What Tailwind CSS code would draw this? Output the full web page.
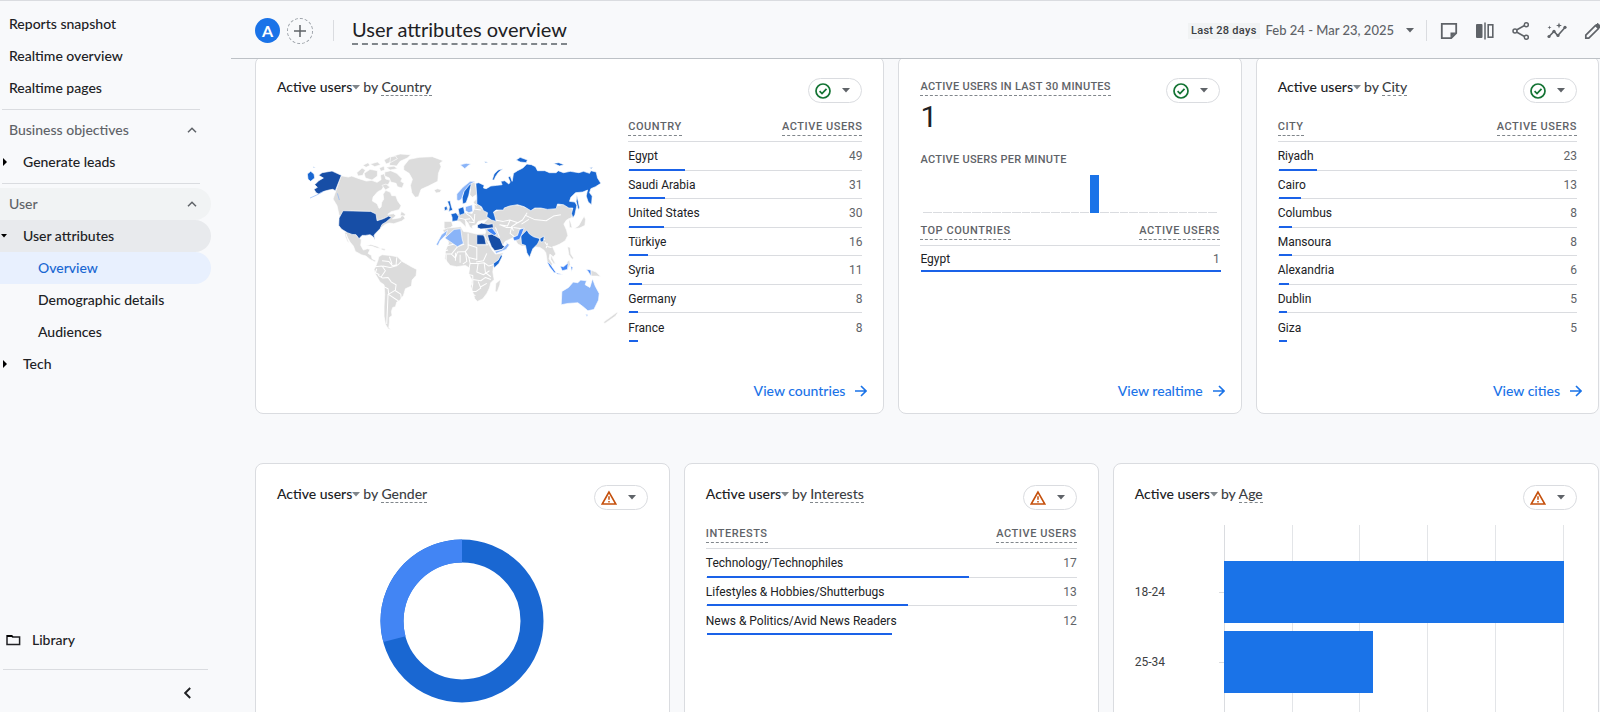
<!DOCTYPE html>
<html lang="en">
  <head>
    <meta charset="UTF-8" />
    <meta name="viewport" content="width=device-width, initial-scale=1.0" />
    <title>User attributes overview</title>

    <script src="https://cdn.jsdelivr.net/npm/@tailwindcss/browser@4"></script>
  </head>
  <body class="flex h-screen overflow-hidden border-t border-[#dadce0] bg-[#f8f9fb] font-[Lato,sans-serif] text-sm font-medium text-[#202124]">
    <!-- Icons -->
    <svg class="hidden">
      <symbol id="caret" viewBox="0 0 8 5"><path d="M0 0h8L4 4.5z" fill="currentColor" /></symbol>
      <symbol id="chevron-up" viewBox="0 0 10 6"><path d="M1 5.2l4-4 4 4" fill="none" stroke="currentColor" stroke-width="1.5" /></symbol>
      <symbol id="check" viewBox="0 0 16 16">
        <circle cx="8" cy="8" r="7" fill="none" stroke="#137333" stroke-width="1.7" />
        <path d="M4.6 8.2l2.4 2.4 4.5-4.8" fill="none" stroke="#137333" stroke-width="1.7" />
      </symbol>
      <symbol id="warning" viewBox="0 0 16 16">
        <path d="M8 2L1.2 14h13.6z" fill="none" stroke="#c5500c" stroke-width="1.6" />
        <path d="M8 6.2v3.6M8 11v1.5" stroke="#c5500c" stroke-width="1.5" />
      </symbol>
      <symbol id="arrow" viewBox="0 0 12 12"><path d="M0 6h10.5M6 1l5 5-5 5" fill="none" stroke="currentColor" stroke-width="1.6" /></symbol>
    </svg>

    <!-- Sidebar -->
    <aside class="flex w-[211px] shrink-0 flex-col">
      <nav class="flex flex-col pt-[7px]">
        <a href="#" class="flex h-8 items-center pl-[9px]">Reports snapshot</a>
        <a href="#" class="flex h-8 items-center pl-[9px]">Realtime overview</a>
        <a href="#" class="flex h-8 items-center pl-[9px]">Realtime pages</a>
        <hr class="mt-[5px] mr-[11px] mb-1 ml-0.5 border-[#dadce0]" />
        <button class="flex h-8 items-center justify-between pr-3.5 pl-[9px] text-[#5f6368]">Business objectives
          <svg class="h-1.5 w-2.5"><use href="#chevron-up" /></svg>
        </button>
        <a href="#" class="flex h-8 items-center gap-4 pl-[3px]">
          <svg class="h-2 w-1" viewBox="0 0 4 8"><path d="M0 0l4 4-4 4z" /></svg>Generate leads
        </a>
        <hr class="mt-[5px] mr-[11px] mb-1 ml-0.5 border-[#dadce0]" />
        <button class="flex h-8 items-center justify-between rounded-r-full bg-[#f1f3f4] pr-3.5 pl-[9px] text-[#5f6368]">User
          <svg class="h-1.5 w-2.5"><use href="#chevron-up" /></svg>
        </button>
        <a href="#" class="flex h-8 items-center gap-4 rounded-r-full bg-[#e8eaed] pl-px">
          <svg class="h-1 w-1.5" viewBox="0 0 6 4"><path d="M0 0h6L3 3.4z" /></svg>User attributes
        </a>
        <a href="#" class="flex h-8 items-center rounded-r-full bg-[#e8f0fe] pl-[38px] text-[#1967d2]">Overview</a>
        <a href="#" class="flex h-8 items-center pl-[38px]">Demographic details</a>
        <a href="#" class="flex h-8 items-center pl-[38px]">Audiences</a>
        <a href="#" class="flex h-8 items-center gap-4 pl-[3px]">
          <svg class="h-2 w-1" viewBox="0 0 4 8"><path d="M0 0l4 4-4 4z" /></svg>Tech
        </a>
      </nav>
      <a href="#" class="mt-auto flex h-8 items-center gap-[11px] pl-1.5">
        <svg class="h-3 w-[15px]" viewBox="0 0 15 12"><path d="M1 1.8h4.6l1 1.2h7v7.6H1z" fill="none" stroke="currentColor" stroke-width="1.5" /><path d="M1 1h5l1.5 2H1z" /></svg>Library
      </a>
      <hr class="mt-[13px] mr-[3px] ml-[3px] border-[#dadce0]" />
      <button class="mr-5 flex h-[42px] items-center self-end pt-1" aria-label="Collapse">
        <svg class="h-3 w-[7px]" viewBox="0 0 7 12"><path d="M6.2 1L1.2 6l5 5" fill="none" stroke="currentColor" stroke-width="1.9" /></svg>
      </button>
    </aside>

    <div class="flex min-w-0 grow flex-col pl-5">
      <!-- Top bar -->
      <header class="flex h-[58px] shrink-0 items-center border-b border-[#bdc1c6] pt-0.5 pl-6">
        <button class="size-[25px] rounded-full bg-[#1a73e8] text-base font-bold text-white">A</button>
        <button class="ml-[7px] flex size-[26px] items-center justify-center rounded-full border border-dashed border-[#9aa0a6]" aria-label="Add comparison">
          <svg class="size-3" viewBox="0 0 12 12"><path d="M6 0v12M0 6h12" stroke="#5f6368" stroke-width="1.5" /></svg>
        </button>
        <div class="mr-[18px] ml-5 h-[21px] border-l border-[#dadce0]"></div>
        <h1 class="border-b-2 border-dashed border-[#80868b] pb-0.5 text-xl leading-[24px] font-normal">User attributes overview</h1>
        <div class="ml-auto flex items-center">
          <span class="bg-[#f1f3f4] px-[3px] font-[Roboto,sans-serif] text-[11px] leading-4 font-medium tracking-wide text-[#3c4043]">Last 28 days</span>
          <button class="ml-1.5 flex items-center gap-3 text-[13px] text-[#5f6368]">Feb 24 - Mar 23, 2025
            <svg class="h-[5px] w-2"><use href="#caret" /></svg>
          </button>
          <div class="mr-3 ml-3 h-[21px] border-l border-[#dadce0]"></div>
          <div class="-mr-[3px] flex items-center gap-4 text-[#5f6368]">
            <button aria-label="Notes"><svg class="size-5" viewBox="0 0 20 20"><path d="M2.8 2.8h14.4v9.4l-5 5H2.8z" fill="none" stroke="currentColor" stroke-width="1.8" /><path d="M11.5 11.5H17L11.5 17z" fill="currentColor" /></svg></button>
            <button aria-label="Compare"><svg class="size-5" viewBox="0 0 20 20"><rect x="1" y="3" width="6.5" height="14" rx="1" fill="currentColor" /><path d="M10 1.5v17" stroke="currentColor" stroke-width="1.5" /><rect x="13.2" y="3.8" width="4.6" height="12.4" fill="none" stroke="currentColor" stroke-width="1.6" /></svg></button>
            <button aria-label="Share"><svg class="size-5" viewBox="0 0 20 20" fill="none" stroke="currentColor" stroke-width="1.5"><path d="M5.5 9l8-4.5M5.5 11l8 4.5" /><circle cx="4" cy="10" r="2" /><circle cx="15.3" cy="3.8" r="2" /><circle cx="15.3" cy="16.2" r="2" /></svg></button>
            <button aria-label="Insights"><svg class="size-5" viewBox="0 0 20 20" fill="currentColor"><path d="M2 15.5l5-5 3.8 4 7.2-8" fill="none" stroke="currentColor" stroke-width="1.6" /><circle cx="2" cy="15.5" r="1.6" /><circle cx="7" cy="10.3" r="1.6" /><circle cx="11" cy="14.5" r="1.6" /><circle cx="18" cy="6.3" r="1.6" /><path d="M12 1.5l.8 2.2 2.2.8-2.2.8-.8 2.2-.8-2.2-2.2-.8 2.2-.8zM2.5 4.5l.5 1.5 1.5.5-1.5.5-.5 1.5-.5-1.5-1.5-.5 1.5-.5z" /></svg></button>
            <button aria-label="Edit"><svg class="size-5" viewBox="0 0 20 20"><path d="M2.8 17.2v-3L12.5 4.5l3 3L5.8 17.2z" fill="none" stroke="currentColor" stroke-width="1.7" /><path d="M12.5 4.5l2.2-2.2 3 3-2.2 2.2z" fill="currentColor" stroke="currentColor" /></svg></button>
          </div>
        </div>
      </header>

      <main class="min-h-0 grow overflow-hidden pr-px pl-6">
        <div class="-mt-[3px] grid grid-cols-[11fr_6fr_6fr] gap-3.5">
          <!-- Country -->
          <section class="flex h-[358px] flex-col rounded-lg border border-[#dadce0] bg-white px-[21px] pt-[21px] pb-3">
            <div class="flex items-start justify-between">
              <h2 class="flex items-baseline leading-[18px]">Active users<svg class="mr-[3px] h-[5px] w-2 self-center text-[#80868b]"><use href="#caret" /></svg><span class="text-[#3c4043]">by <span class="border-b border-dashed border-[#80868b]">Country</span></span></h2>
              <button class="flex h-[25px] w-[54px] items-center justify-between rounded-full border border-[#dadce0] pr-[11px] pl-1.5 text-[#5f6368]" aria-label="Data quality"><svg class="size-4"><use href="#check" /></svg><svg class="h-[5px] w-2"><use href="#caret" /></svg></button>
            </div>
            <div class="mt-2 grid grid-cols-[3fr_2fr]">
              <svg class="mt-[29px] w-full" viewBox="-69 0 1053 600" stroke="#fff" stroke-width="2" stroke-linejoin="round" role="img" aria-label="Active users by country">
                <g fill="#dcdcdc">
                  <!-- Canada and the Arctic islands -->
                  <path d="M123 107l22 4 10-3 22 8 22 7 16-2 16 6 12-8-2-14 12-4 4 16 14 4-6 12-14 6-6 10-12 6-14 16-2 12 14 8 6 14 6-4 2-14 6-10-2-14 8-12 14 6 4 10 12 0 6 16 10 14-6 12-24 6-10 8 18-2 6 6-10 10 24-4 6-10 8 12-10 8-24 8-14-2-12 4-12 10-16 2-2-18-16-6-82-4-10-12-6-28-12-20z" />
                  <path d="M170 98l16-14 10 6-8 16-14 2zM192 100l18-12 22 4 0 16-16 12-20-6zM188 76l16-8 6 8-12 6zM210 72l22-6 10 8-18 6zM238 84l14-6 2 12-12 4zM254 96l18-4 18 8 16 16-4 8 10 6-6 14-14-4-4-10-16-4-4-12-14-6zM258 82l24-4 10 8-22 4zM252 60l18-10 16-2 6 8-18 10-16 6zM272 50l28-8 32 2-10 10-22 10-10 14-22-2zM246 136l12-4 12 10-14 8z" />
                  <path d="M311 78l16-20 30-6 40-2 32 12-10 8 4 10-8 20-2 24-28 14-22 10-8 22-10 2-10-14-4-22 6-18-10-18-16-10z" />
                  <path d="M402 150l10-4 12 3-4 8-12 2zM304 214l12 8-2 6-14-2z" />
                  <!-- Mexico and Central America -->
                  <path d="M134 276l14 2 18 4 10 12 8 4-2 18 8 14 12-4 8 2-6 12 10 6 2 10 12 6-4 3-14-7-12-10-14-4-18-10-6-16-10-12-8-14-4-10 4 14 6 14-6-6-6-14z" />
                  <path d="M198 318l14-5 20 6 10 6-12-1-16-6zM244 324l12 3-2 4-10-2z" />
                  <!-- South America -->
                  <path d="M236 350l10-6 24 2 22 4 14 14 14 8 14 8 16 8-2 18-12 14-2 18-18 8-6 20-12 16-8 4-4 14-8 2-4 12 2 12-8 6 0 14-2 16 6 6-8-2-8-14-4-24 0-30 2-36-2-28-12-8-14-24-4-14 6-12 6-16z" />
                  <!-- Europe -->
                  <path d="M432 244l22 0 4 12-8 8-14 4-4-6zM466 224l16-8 20 2 14 2 8-18-4-16 8-8 8 6 6 18 20 14 10 10-8 12-30 6-6 10-12 4 2 8-8-4-6-12-8-6 2 18-10-10-8-8-12-2zM509 132l14-8 6 20 2 18-14 10-8-8 2-16zM438 203l6-2 1 9-7 3z" />
                  <!-- Africa -->
                  <path d="M428 270l14-6 40-4 8 14 14 2 26 6 26-2 2 12 8 20 10 18 10 12 24-4-10 20-20 22-2 16 4 22-10 10-4 16-8 16-12 16-16 8-8-8-6-20-6-16 4-20-10-18 2-18-12-8-26 4-20-4-16-20 2-24 10-24z" />
                  <path d="M587 430l14-12-2 16-8 22-6-2z" />
                  <!-- Asia -->
                  <path d="M581 216l30-14 30-10 24 6 28 12 16-8 30 4 20-10 20 0 14-6 20 10 6 12-4 20-16 8-8 12 8 18 4 16-8 16-16 10-14 6-8 2 10 22-8 8-10-8-2 14 10 16-4 6-12-14-4-26-6-8-12-8-34-4-20 0-12-6-12-20-26 12-8 14-30-6-16-10-8-16 4-12-10-20z" />
                  <path d="M806 236l6 12 4 16-8-2zM846 238l6-10 4 10-2 18-16 8-16 2 14-10zM802 320l8 2 2 20 8 12-4 4-10-14z" />
                  <path d="M752 344l8 16 6 12-6-2-8-12zM800 366l8-6 2 14-6 12zM872 390l16 6 14 14-12-2-18 0zM948 518l6-2-8 12-32 22-4-4z" />
                </g>
                <!-- Borders inside the continents -->
                <path d="M246 362l20 2 10 12 18-2 10-10M224 380l22-2 10 14-14 20M248 378l22 4 22-6M234 406l14 8 16-2 10 14 14 8-2 16-20 12-2-16-16-8M264 462l-4 90M286 452l16 10 2 16M264 462l30 20 4 12M268 350l8 22M290 352l-2 22M230 386l-4 12 12 6
                         M410 306l24-4 10 14 20-4M432 310v32h22l18-22 20-8M444 330l-32 8M454 342l12 12 6-18 24-2 8-10V280M504 314l26 8v36l-24-6-10-16M530 314h34M560 340l-10 22-22 4M496 334l4 30-12 8M466 338v24M480 344v24M424 340v22M438 344v22M506 352l4 18 24 0 18-2 14 10M510 370l-6 28h-12M534 370l-4 26 20 8 18-12M552 368l4 30M492 400l26 6v26h-22M518 418l24 4 14-10 16 6M518 432l-6 30M534 424l8 20-14 10-12 0M542 440l18-10M500 456l12 6 14 4M496 432h22M566 378l24-8M556 398l16 12
                         M470 232l24 6 16-2M498 220l14 10 10 14M512 186l18 10M516 206l26 4M494 238l10 14M506 246l18 2M524 222l-2 24
                         M585 240l24 4 20-4 24 8 14-8 14-22M630 240l-8 18-24-4M600 254l18 8 20 0M652 248l-18 12 6 12M640 262l24 4M676 226l26 12 36 4 22-14 22-4M634 262l-4 18 18 14M668 264l-10 18M680 280l30 18 24 0M734 306l10 14 10 2M742 310l-4 14M664 252l22-14M586 262l12 30" fill="none" stroke-width="3" />
                <!-- 20 and more active users -->
                <g fill="#174ea6">
                  <path d="M66 98l30-5 28 13-18 46-8-4-12 2-14 4-16 8-8-4-6-10 10-6-8-8 12-12 14-8-14-8z" />
                  <path d="M129 212L212 214 228 222 231 242 250 236 266 228 274 232 258 246 246 253 240 266 226 280 222 286 225 300 219 290 210 284 196 286 186 286 177 296 168 284 156 283 142 278 124 267 116 256 117 234z" />
                  <path d="M532 255l12-6 20 4 14-2 2 12-16 2-22 2-10-4zM530 284l20 1 4 8 4 20h-28zM562 285l14-3 24 14 8 20 8 4-12 8-20 4-10-12-8-20z" />
                </g>
                <g fill="#1967d2">
                  <path d="M527 130L536 128 552 136 550 144 558 146 572 138 590 136 606 134 602 124 614 122 626 132 630 126 624 112 630 108 636 124 640 100 652 92 668 84 680 72 694 74 706 80 712 92 734 92 748 98 768 98 774 92 790 98 810 94 836 98 850 94 868 100 872 92 888 96 892 114 902 130 886 140 872 146 868 158 876 168 874 194 864 186 858 168 862 150 848 156 826 158 812 172 808 184 824 186 830 196 824 224 818 234 814 220 818 204 806 204 790 194 772 192 768 206 742 208 722 204 704 204 692 212 672 200 652 194 628 198 612 204 610 210 588 210 580 216 584 228 588 244 574 240 560 230 562 218 550 212 544 200 530 192 530 170z" />
                  <path d="M576 120l6-18 12-12 14-4-14 12-8 12-4 10zM648 60l12-8 22 8-4 8-18-2zM760 70l16-2 16 6-14 4zM868 83l10-1-4 4zM553 65l10 1-6 3zM830 166l4 18 4 20-4 4-6-24z" />
                  <path d="M22 102l10-8 10 8 2 12-12 10-8-6zM40 80l6 2-6 2z" />
                  <path d="M492 150l8-14 14-6-4 16-4 20-8 22-10 4-2-20zM474 206l16-6 4 20-16 6zM452 222l16-4 8 12-4 12-16 2 0-12zM442 184l8-2 4 18 4 10-12 4 2-14zM432 202l8-4 2 10-8 4z" />
                  <path d="M662 288l18-18 8 12 12 8 20 6-8 16-14 14-10 26-8-14-4-22-12-4zM718 296l14-8-2 16-8 2zM580 370l14-10 10-18 2 8-10 20-14 14z" />
                </g>
                <g fill="#4285f4">
                  <path d="M638 292l14-6 6-18 14-4-6 16-8 18-16 4zM558 268l10-2 8-2 14 18-8 4-16-10zM740 364l10 8 18 26-6 0-14-18zM780 378l10 2 14-12-2 20-16 4zM768 398l22 6-20-2zM858 388l14 2v18l-8-14zM812 378l6 4-4 12z" />
                </g>
                <g fill="#8ab4f8">
                  <path d="M434 294l28-26 20-2 4 30 4 14-18 10zM408 314l16-30 18-14-4 14-18 18-6 14zM470 180l0-18 18-20 22-18 16 0-18 10-16 20-8 24-8 4zM496 200l20-6 2 20-12 4-10-6zM480 74l18-4 14 2-12 8-6 6zM584 334l22-6 14-16-4-6 12 8-10 14-30 12z" />
                  <path d="M785 454l20-12 14-16 14 2 8-8 18 2-4 12 14 8 8-26 8 22 12 22-2 20-14 28-18 4-14-12-16-12-30 2-20 4zM856 522l8 2-4 6z" />
                </g>
                <path d="M30 174l20-9 18-10M112 160l6 20" fill="none" stroke="#8ab4f8" stroke-width="2" />
              </svg>
              <table class="w-full border-separate border-spacing-0 self-start font-[Roboto,sans-serif] text-xs" data-rows="country"></table>
            </div>
            <a href="#" class="-mr-[5px] mt-auto flex items-center justify-end gap-2.5 leading-5 font-medium text-[#1a73e8]">View countries<svg class="size-3"><use href="#arrow" /></svg></a>
          </section>

          <!-- Realtime -->
          <section class="flex h-[358px] flex-col rounded-lg border border-[#dadce0] bg-white px-[21px] pt-[21px] pb-3">
            <div class="flex items-start justify-between">
              <h2 class="border-b border-dashed border-[#80868b] font-[Roboto,sans-serif] text-[11px] leading-[17px] tracking-wide text-[#5f6368]">ACTIVE USERS IN LAST 30 MINUTES</h2>
              <button class="flex h-[25px] w-[54px] items-center justify-between rounded-full border border-[#dadce0] pr-[11px] pl-1.5 text-[#5f6368]" aria-label="Data quality"><svg class="size-4"><use href="#check" /></svg><svg class="h-[5px] w-2"><use href="#caret" /></svg></button>
            </div>
            <div class="-mt-0.5 font-[Roboto,sans-serif] text-3xl leading-8 font-normal">1</div>
            <h3 class="mt-[19px] font-[Roboto,sans-serif] text-[11px] leading-4 tracking-wide text-[#5f6368]">ACTIVE USERS PER MINUTE</h3>
            <div id="minutes" class="mx-[3px] mt-[7px] flex h-[38px] items-end gap-px"></div>
            <table class="mt-0.5 w-full border-separate border-spacing-0 font-[Roboto,sans-serif] text-xs" data-rows="realtime"></table>
            <a href="#" class="-mr-[5px] mt-auto flex items-center justify-end gap-2.5 leading-5 font-medium text-[#1a73e8]">View realtime<svg class="size-3"><use href="#arrow" /></svg></a>
          </section>

          <!-- City -->
          <section class="flex h-[358px] flex-col rounded-lg border border-[#dadce0] bg-white px-[21px] pt-[21px] pb-3">
            <div class="flex items-start justify-between">
              <h2 class="flex items-baseline leading-[18px]">Active users<svg class="mr-[3px] h-[5px] w-2 self-center text-[#80868b]"><use href="#caret" /></svg><span class="text-[#3c4043]">by <span class="border-b border-dashed border-[#80868b]">City</span></span></h2>
              <button class="flex h-[25px] w-[54px] items-center justify-between rounded-full border border-[#dadce0] pr-[11px] pl-1.5 text-[#5f6368]" aria-label="Data quality"><svg class="size-4"><use href="#check" /></svg><svg class="h-[5px] w-2"><use href="#caret" /></svg></button>
            </div>
            <table class="mt-2 w-full border-separate border-spacing-0 font-[Roboto,sans-serif] text-xs" data-rows="city"></table>
            <a href="#" class="-mr-[5px] mt-auto flex items-center justify-end gap-2.5 leading-5 font-medium text-[#1a73e8]">View cities<svg class="size-3"><use href="#arrow" /></svg></a>
          </section>
        </div>

        <div class="mt-[49px] grid grid-cols-[29fr_29fr_34fr] gap-3.5">
          <!-- Gender -->
          <section class="flex h-[358px] flex-col rounded-lg border border-[#dadce0] bg-white px-[21px] pt-[21px]">
            <div class="flex items-start justify-between">
              <h2 class="flex items-baseline leading-[18px]">Active users<svg class="mr-[3px] h-[5px] w-2 self-center text-[#80868b]"><use href="#caret" /></svg><span class="text-[#3c4043]">by <span class="border-b border-dashed border-[#80868b]">Gender</span></span></h2>
              <button class="flex h-[25px] w-[54px] items-center justify-between rounded-full border border-[#dadce0] pr-[11px] pl-1.5 text-[#5f6368]" aria-label="Data quality"><svg class="size-4"><use href="#warning" /></svg><svg class="h-[5px] w-2"><use href="#caret" /></svg></button>
            </div>
            <svg class="mx-auto mt-[29px] size-[164px]" viewBox="-82 -82 164 164" fill="none" stroke-width="23" role="img" aria-label="Active users by gender">
              <circle r="70" stroke="#1967d2" />
              <path d="M-67.6 18.1A70 70 0 0 1 0 -70" stroke="#4285f4" />
            </svg>
          </section>

          <!-- Interests -->
          <section class="flex h-[358px] flex-col rounded-lg border border-[#dadce0] bg-white px-[21px] pt-[21px]">
            <div class="flex items-start justify-between">
              <h2 class="flex items-baseline leading-[18px]">Active users<svg class="mr-[3px] h-[5px] w-2 self-center text-[#80868b]"><use href="#caret" /></svg><span class="text-[#3c4043]">by <span class="border-b border-dashed border-[#80868b]">Interests</span></span></h2>
              <button class="flex h-[25px] w-[54px] items-center justify-between rounded-full border border-[#dadce0] pr-[11px] pl-1.5 text-[#5f6368]" aria-label="Data quality"><svg class="size-4"><use href="#warning" /></svg><svg class="h-[5px] w-2"><use href="#caret" /></svg></button>
            </div>
            <table class="mt-2 w-full border-separate border-spacing-0 font-[Roboto,sans-serif] text-xs" data-rows="interests"></table>
          </section>

          <!-- Age -->
          <section class="flex h-[358px] flex-col rounded-lg border border-[#dadce0] bg-white px-[21px] pt-[21px]">
            <div class="flex items-start justify-between">
              <h2 class="flex items-baseline leading-[18px]">Active users<svg class="mr-[3px] h-[5px] w-2 self-center text-[#80868b]"><use href="#caret" /></svg><span class="text-[#3c4043]">by <span class="border-b border-dashed border-[#80868b]">Age</span></span></h2>
              <button class="flex h-[25px] w-[54px] items-center justify-between rounded-full border border-[#dadce0] pr-[11px] pl-1.5 text-[#5f6368]" aria-label="Data quality"><svg class="size-4"><use href="#warning" /></svg><svg class="h-[5px] w-2"><use href="#caret" /></svg></button>
            </div>
            <div class="mt-[15px] mr-[13px] flex grow font-[Roboto,sans-serif] text-xs font-normal text-[#3c4043]">
              <div class="flex w-[84px] flex-col gap-2 pt-9">
                <div class="flex h-[62px] items-center">18-24</div>
                <div class="flex h-[62px] items-center">25-34</div>
              </div>
              <div class="flex w-[5px] flex-col gap-[69px] pt-[67px]">
                <div class="h-px bg-[#dadce0]"></div>
                <div class="h-px bg-[#dadce0]"></div>
              </div>
              <div class="relative grow">
                <div class="absolute inset-0 grid grid-cols-5 border-l border-[#dadce0]">
                  <div class="border-r border-[#e3e5e8]"></div>
                  <div class="border-r border-[#e3e5e8]"></div>
                  <div class="border-r border-[#e3e5e8]"></div>
                  <div class="border-r border-[#e3e5e8]"></div>
                  <div class="border-r border-[#e3e5e8]"></div>
                </div>
                <div class="relative flex flex-col gap-2 pt-9">
                  <div class="h-[62px] bg-[#1a73e8]" style="width: 100%"></div>
                  <div class="h-[62px] bg-[#1a73e8]" style="width: 44%"></div>
                </div>
              </div>
            </div>
          </section>
        </div>
      </main>
    </div>

    <script>
      // total is the value at which a row's bar fills the whole table width
      const tables = {
        country: {
          head: "COUNTRY",
          total: 204,
          rows: [["Egypt", 49], ["Saudi Arabia", 31], ["United States", 30], ["Türkiye", 16], ["Syria", 11], ["Germany", 8], ["France", 8]],
        },
        realtime: {
          head: "TOP COUNTRIES",
          total: 1,
          rows: [["Egypt", 1]],
        },
        city: {
          head: "CITY",
          total: 178,
          rows: [["Riyadh", 23], ["Cairo", 13], ["Columbus", 8], ["Mansoura", 8], ["Alexandria", 6], ["Dublin", 5], ["Giza", 5]],
        },
        interests: {
          head: "INTERESTS",
          total: 24,
          rows: [["Technology/Technophiles", 17], ["Lifestyles & Hobbies/Shutterbugs", 13], ["News & Politics/Avid News Readers", 12]],
        },
      };

      document.querySelectorAll("[data-rows]").forEach((table) => {
        const t = tables[table.dataset.rows];
        // a single row sits tighter under the header
        const height = t.rows.length === 1 ? "h-[26px]" : "odd:h-[29px] even:h-[28px]";
        let html = `<thead><tr class="h-[31px] text-[11px] tracking-wider text-[#5f6368]">
          <th scope="col" class="border-b border-[#dadce0] pb-[5px] text-left align-bottom font-medium"><span class="inline-block border-b border-dashed border-[#80868b] leading-[17px]">${t.head}</span></th>
          <th scope="col" class="border-b border-[#dadce0] pb-[5px] text-right align-bottom font-medium"><span class="inline-block border-b border-dashed border-[#80868b] leading-[17px]">ACTIVE USERS</span></th>
        </tr></thead><tbody class="font-normal">`;
        t.rows.forEach(([name, users], i) => {
          const line = i < t.rows.length - 1 ? "border-b border-[#dadce0]" : "";
          html += `<tr class="relative ${height}">
            <td class="p-0 text-[#202124] ${line}">${name.replace("&", "&amp;")}<div class="absolute bottom-0 left-px h-0.5 bg-[#1a62e8]" style="width: ${(users / t.total) * 100}%"></div></td>
            <td class="p-0 text-right text-[#5f6368] ${line}">${users}</td>
          </tr>`;
        });
        table.innerHTML = html + "</tbody>";
      });

      // one slot per minute, the last 30 minutes
      const minutes = document.getElementById("minutes");
      for (let i = 0; i < 30; i++) {
        const bar = document.createElement("div");
        bar.className = i === 17 ? "h-full grow bg-[#1a73e8]" : "h-px grow bg-[#dadce0]";
        minutes.appendChild(bar);
      }
    </script>
  </body>
</html>
